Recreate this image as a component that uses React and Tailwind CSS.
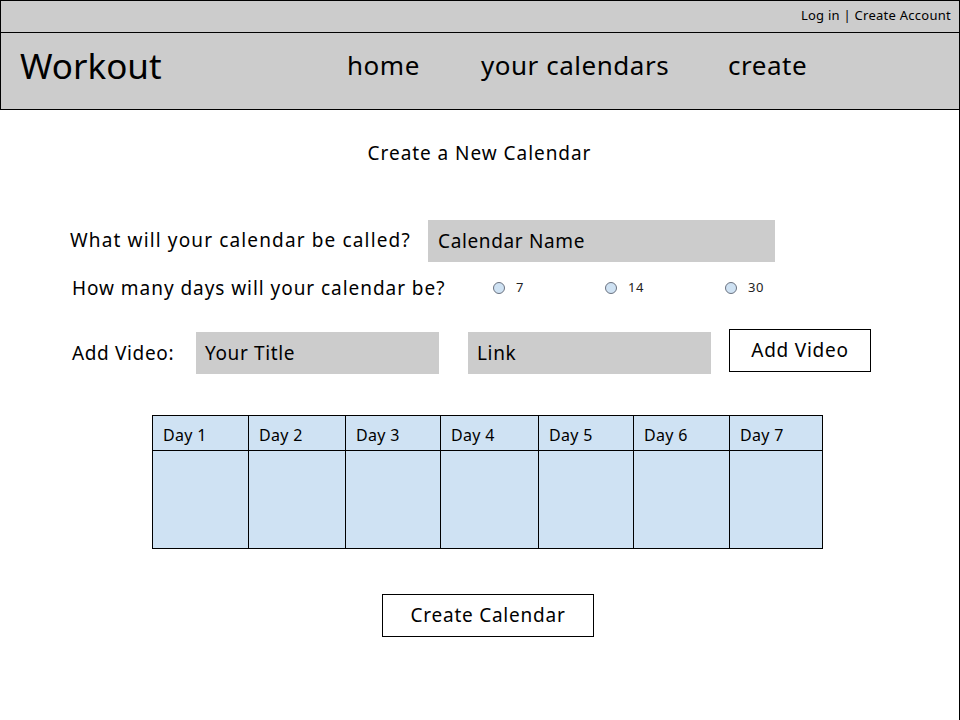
import React from 'react';

const font = { fontFamily: '"Noto Sans", "DejaVu Sans", sans-serif' };

const days = ['Day 1', 'Day 2', 'Day 3', 'Day 4', 'Day 5', 'Day 6', 'Day 7'];
const colWidths = ['w-[96px]', 'w-[97px]', 'w-[95px]', 'w-[98px]', 'w-[95px]', 'w-[96px]', 'w-[93px]'];

function Radio({ label, className }) {
    return (
        <label className={`flex items-center gap-[11px] ${className}`}>
            <span className="w-[12px] h-[12px] rounded-full border border-[#6b7280] bg-[#cfe2f3]" />
            <span className="text-[13px] text-[#222]">{label}</span>
        </label>
    );
}

export default function App() {
    return (
        <div className="w-[960px] h-[720px] bg-white text-black overflow-hidden" style={font}>
            {/* top bar */}
            <div className="h-[33px] bg-[#cccccc] border border-black flex items-center justify-end pr-[8px]">
                <span className="text-[13px] tracking-[0.02em] -mt-[2px]">Log in | Create Account</span>
            </div>
            {/* header */}
            <header className="h-[77px] bg-[#cccccc] border border-t-0 border-black flex items-center">
                <div className="pl-[19px] w-[346px] text-[35px] leading-none pb-[12px]">Workout</div>
                <nav className="flex items-center text-[26px] leading-none pb-[12px] tracking-[0.02em]">
                    <span className="w-[134px]">home</span>
                    <span className="w-[247px]">your calendars</span>
                    <span>create</span>
                </nav>
            </header>

            <main className="h-[610px] border-r border-black flex flex-col tracking-[0.04em]">
                <h1 className="text-[19px] text-center mt-[31px] leading-[24px] tracking-[0.05em]">Create a New Calendar</h1>

                {/* name row */}
                <div className="flex items-center mt-[55px] pl-[70px]">
                    <span className="w-[358px] text-[19px] tracking-[0.06em] -mt-[2px]">What will your calendar be called?</span>
                    <div className="w-[347px] h-[42px] bg-[#cccccc] flex items-center pl-[10px] text-[19px]">Calendar Name</div>
                </div>

                {/* days row */}
                <div className="flex items-center mt-[6px] pl-[72px] h-[40px]">
                    <span className="w-[421px] text-[19px] tracking-[0.05em]">How many days will your calendar be?</span>
                    <Radio label="7" className="w-[112px]" />
                    <Radio label="14" className="w-[120px]" />
                    <Radio label="30" />
                </div>

                {/* add video row */}
                <div className="flex items-center mt-[24px] pl-[72px]">
                    <span className="w-[124px] text-[19px]">Add Video:</span>
                    <div className="w-[243px] h-[42px] bg-[#cccccc] flex items-center pl-[9px] text-[19px]">Your Title</div>
                    <div className="w-[243px] h-[42px] bg-[#cccccc] flex items-center pl-[9px] text-[19px] ml-[29px]">Link</div>
                    <button className="w-[142px] h-[43px] border border-black bg-white text-[19px] ml-[18px] -mt-[5px] tracking-[0.04em]">Add Video</button>
                </div>

                {/* day grid */}
                <div className="flex mt-[41px] ml-[152px] w-[671px] h-[134px] border border-black bg-[#cfe2f3]">
                    {days.map((d, i) => (
                        <div key={d} className={`${colWidths[i]} flex flex-col ${i < 6 ? 'border-r border-black' : 'flex-1'}`}>
                            <div className="h-[35px] border-b border-black flex items-center pl-[10px] text-[16px] pt-[4px] tracking-[0.02em]">{d}</div>
                            <div className="flex-1" />
                        </div>
                    ))}
                </div>

                <div className="flex mt-[45px] ml-[382px]">
                    <button className="w-[212px] h-[43px] border border-black bg-white text-[19px] tracking-[0.04em]">Create Calendar</button>
                </div>
            </main>
        </div>
    );
}
